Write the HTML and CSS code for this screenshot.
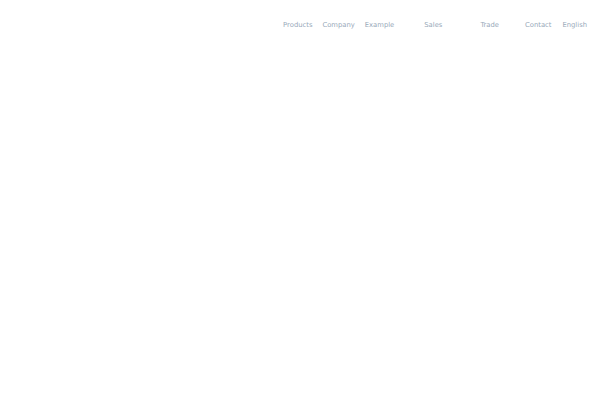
FILE: index.html
```html
<!DOCTYPE html>
<html>
<head>
<meta charset="utf-8">
<link rel="stylesheet" href="styles.css">
</head>
<body>
<header class="top">
  <nav class="nav">
    <a class="item">Products</a>
    <a class="item company">Company</a>
    <a class="item example">Example</a>
    <a class="item sales">Sales</a>
    <a class="item trade">Trade</a>
    <a class="item contact">Contact</a>
    <a class="item english">English</a>
  </nav>
</header>
</body>
</html>
```
FILE: styles.css
```css
html, body {
  margin: 0;
  padding: 0;
  background: #ffffff;
}
body {
  width: 600px;
  height: 400px;
  font-family: "DejaVu Sans", sans-serif;
}
.top {
  display: flex;
  justify-content: flex-end;
  padding: 20px 13px 0 0;
}
.nav {
  display: flex;
  align-items: center;
}
.item {
  font-size: 6.8px;
  line-height: 10px;
  color: #98a9b9;
  text-decoration: none;
}
.company { margin-left: 10px; }
.example { margin-left: 10px; }
.sales { margin-left: 30px; }
.trade { margin-left: 38px; }
.contact { margin-left: 26px; }
.english { margin-left: 11px; }
```
